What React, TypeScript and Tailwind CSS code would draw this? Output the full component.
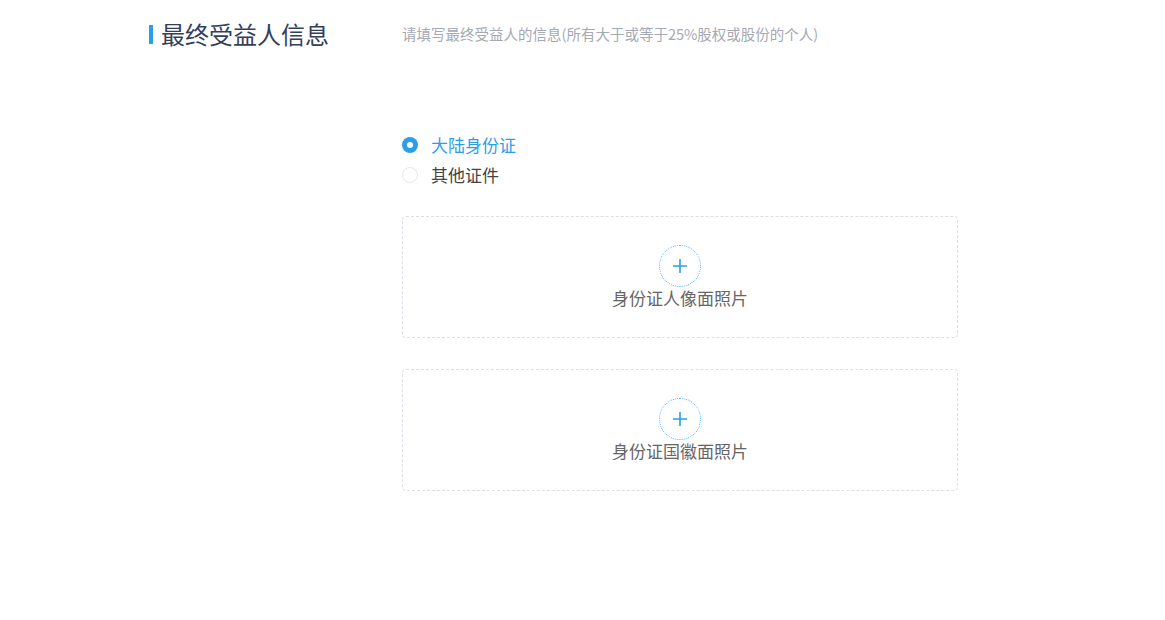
import { useState } from "react";

const font = { fontFamily: '"Noto Sans CJK SC", "Noto Sans", sans-serif' };

function UploadBox({ label }: { label: string }) {
  return (
    <div className="h-[122px] rounded border border-dashed border-[#dcdfe6] flex flex-col items-center pt-[28px] cursor-pointer">
      <div className="w-[42px] h-[42px] rounded-full border border-dotted border-[#4fb0ee] flex items-center justify-center">
        <svg width="16" height="16" viewBox="0 0 16 16">
          <path d="M8 1v14M1 8h14" stroke="#2b9ee8" strokeWidth="1.6" fill="none" />
        </svg>
      </div>
      <span className="-mt-[1px] text-[17px] leading-[24px] text-[#666]">{label}</span>
    </div>
  );
}

function Radio({ checked, label, onClick }: { checked: boolean; label: string; onClick: () => void }) {
  return (
    <label className="flex items-center h-[30px] cursor-pointer" onClick={onClick}>
      {checked ? (
        <span className="w-4 h-4 rounded-full bg-[#2b9ee8] flex items-center justify-center">
          <span className="w-[6px] h-[6px] rounded-full bg-white" />
        </span>
      ) : (
        <span className="w-4 h-4 rounded-full border border-[#e4e7ed] bg-white" />
      )}
      <span className={`ml-[13px] text-[17px] leading-[24px] -mt-[1px] ${checked ? "text-[#2b9ee8]" : "text-[#444]"}`}>{label}</span>
    </label>
  );
}

export default function App() {
  const [idType, setIdType] = useState<"mainland" | "other">("mainland");

  return (
    <div className="w-[1165px] h-[620px] bg-white" style={font}>
      <div className="flex pl-[149px] pt-[14px] h-[40px] box-content">
        <div className="w-[253px] flex items-center">
          <span className="w-[4px] h-[19px] bg-[#2b9ee8]" />
          <h1 className="ml-[8px] text-[24px] leading-[40px] text-[#33405c]">最终受益人信息</h1>
        </div>
        <p className="flex items-center text-[14.5px] text-[#a5a9b3]">
          请填写最终受益人的信息(所有大于或等于25%股权或股份的个人)
        </p>
      </div>

      <div className="ml-[402px] w-[556px] mt-[76px]">
        <div className="flex flex-col">
          <Radio checked={idType === "mainland"} label="大陆身份证" onClick={() => setIdType("mainland")} />
          <Radio checked={idType === "other"} label="其他证件" onClick={() => setIdType("other")} />
        </div>
        <div className="mt-[26px] flex flex-col gap-[31px]">
          <UploadBox label="身份证人像面照片" />
          <UploadBox label="身份证国徽面照片" />
        </div>
      </div>
    </div>
  );
}
